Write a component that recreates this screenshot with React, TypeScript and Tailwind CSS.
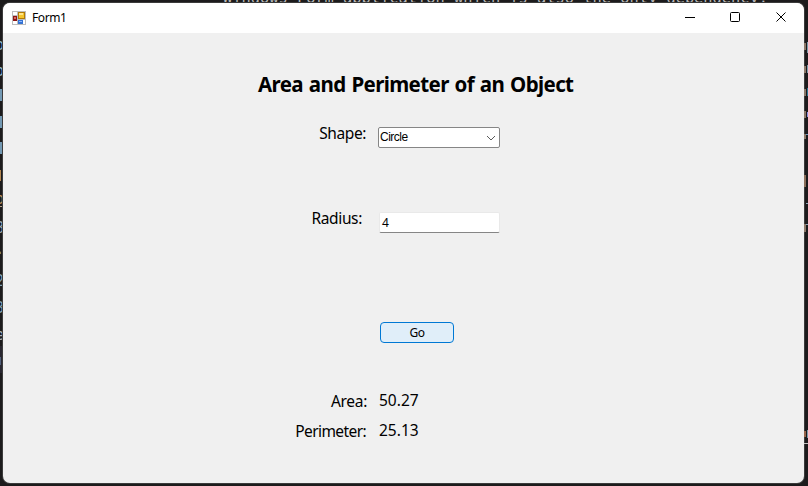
import React from "react";

const leftGlyphs = [
  { top: 36, char: "o", color: "#8fb4c9" },
  { top: 62, char: "o", color: "#8fb4c9" },
  { top: 190, char: "o", color: "#b98f5c" },
  { top: 219, char: "8", color: "#9aa9b5" },
  { top: 240, char: ".", color: "#9ab8c9" },
  { top: 272, char: "2", color: "#7f9fb0" },
  { top: 299, char: "3", color: "#7f9fb0" },
  { top: 326, char: "e", color: "#a9b0b5" },
];

const leftBars = [
  { top: 89, height: 12, width: 2, color: "#7399b3" },
  { top: 116, height: 12, width: 2, color: "#7399b3" },
  { top: 142, height: 12, width: 2, color: "#7399b3" },
  { top: 170, height: 11, width: 1, color: "#b28650" },
  { top: 206, height: 1, width: 3, color: "#b9a58c" },
  { top: 346, height: 27, width: 3, color: "#292730" },
  { top: 357, height: 8, width: 1, color: "#51607a" },
];

const rightMarks = [
  { left: 804, top: 43, height: 7, width: 2, color: "#8a7768" },
  { left: 807, top: 42, height: 11, width: 1, color: "#7e9aaa" },
  { left: 804, top: 66, height: 7, width: 2, color: "#8a7768" },
  { left: 807, top: 65, height: 8, width: 1, color: "#7e9aaa" },
  { left: 804, top: 89, height: 7, width: 2, color: "#8a7768" },
  { left: 807, top: 88, height: 8, width: 1, color: "#2c7591" },
  { left: 804, top: 111, height: 7, width: 2, color: "#8a7768" },
  { left: 807, top: 112, height: 5, width: 1, color: "#8d8fe0" },
  { left: 804, top: 134, height: 5, width: 2, color: "#8a7768" },
  { left: 806, top: 134, height: 1, width: 2, color: "#6c9bc0" },
  { left: 804, top: 175, height: 12, width: 2, color: "#8a6e5a" },
  { left: 806, top: 203, height: 1, width: 2, color: "#8ba5b8" },
  { left: 804, top: 224, height: 8, width: 2, color: "#8a7768" },
  { left: 806, top: 224, height: 1, width: 2, color: "#8ba5b8" },
  { left: 804, top: 431, height: 6, width: 2, color: "#96644a" },
  { left: 807, top: 430, height: 8, width: 1, color: "#7e9aaa" },
  { left: 804, top: 443, height: 1, width: 4, color: "#c2c2c2" },
];

function EditorBackdrop() {
  return (
    <div className="absolute inset-0 overflow-hidden font-['DejaVu_Sans_Mono',monospace] text-[15.35px] leading-[18px] whitespace-pre text-[#b6b6b6]">
      <div className="absolute top-[-11px] left-[223px]">
        Windows Form application which is also the only dependency.
      </div>
      <div className="absolute top-[467px] left-[223px]">
        {" [                "}
        <span className="text-[#b0705a]">g      ]</span>
        {"  (,    g  ,      g    p g)"}
      </div>
      {leftGlyphs.map((g) => (
        <div key={g.top} className="absolute left-[-5px]" style={{ top: g.top, color: g.color }}>
          {g.char}
        </div>
      ))}
      {leftBars.map((b) => (
        <div
          key={b.top}
          className="absolute left-0"
          style={{ top: b.top, height: b.height, width: b.width, background: b.color }}
        />
      ))}
    </div>
  );
}

function FormIcon() {
  return (
    <svg width="14" height="14" viewBox="0 0 14 14" shapeRendering="crispEdges">
      <rect width="14" height="14" fill="#bdbdbd" />
      <rect x="1" y="1" width="4" height="3" fill="#fff" />
      <rect x="1" y="10" width="4" height="3" fill="#fff" />
      <rect x="11" y="9" width="2" height="4" fill="#fff" />
      <rect x="1" y="5" width="4" height="5" fill="#8e1515" />
      <rect x="2" y="6" width="2" height="2" fill="#d86b5f" />
      <rect x="6" y="1" width="7" height="7" fill="#b27a08" />
      <rect x="7" y="2" width="5" height="5" fill="#f5c52d" />
      <rect x="7" y="2" width="4" height="2" fill="#ffe58a" />
      <rect x="6" y="9" width="5" height="4" fill="#3572d3" />
      <rect x="7" y="10" width="3" height="1" fill="#8bb7fa" />
    </svg>
  );
}

function TitleBar() {
  return (
    <header className="flex h-[30px] shrink-0 items-center bg-white pl-[9px]">
      <FormIcon />
      <span className="ml-[6px] text-[12px] leading-4 tracking-[-0.4px]">Form1</span>
      <div className="ml-auto flex h-full items-center">
        <svg width="138" height="30" viewBox="0 0 138 30" fill="none" stroke="#000">
          <path d="M19 14.5h10" />
          <rect x="64.5" y="9.5" width="9" height="9" rx="1" />
          <path d="M110.5 9.5l9 9M119.5 9.5l-9 9" />
        </svg>
      </div>
    </header>
  );
}

export default function App() {
  return (
    <div className="relative h-[486px] w-[808px] overflow-hidden bg-[#1c1b1c] font-['Noto_Sans','Segoe_UI',sans-serif] text-black">
      <EditorBackdrop />
      <div className="absolute top-[3px] left-[3px] flex h-[480px] w-[801px] flex-col overflow-hidden rounded-[7px] bg-[#f0f0f0] shadow-[0_0_0_1px_#3b3b3b]">
        <TitleBar />
        <main className="flex flex-col">
          <h1 className="mt-[36px] ml-[255px] text-[20.5px] leading-[30px] font-bold tracking-[-0.61px] [word-spacing:1.1px] whitespace-nowrap">
            Area and Perimeter of an Object
          </h1>
          <div className="mt-[27px] flex h-[22px]">
            <label className="w-[363px] text-right text-[15.5px] leading-[15px] tracking-[-0.4px]">Shape:</label>
            <div className="mt-[1px] ml-[12px] flex h-[21px] w-[122px] items-center justify-between rounded-[2px] border border-[#868686] bg-white pr-[3px] pl-[1px]">
              <span className="mt-[-2px] font-['Liberation_Sans',Arial,sans-serif] text-[12px] leading-[18px] tracking-[-0.5px]">Circle</span>
              <svg width="10" height="6" viewBox="0 0 10 6" fill="none" stroke="#5c5c5c">
                <path d="M1 1l4 4 4-4" />
              </svg>
            </div>
          </div>
          <div className="mt-[63px] flex h-[22px]">
            <label className="w-[359px] text-right text-[15.5px] leading-[15px] tracking-[-0.35px]">Radius:</label>
            <div className="mt-[1px] ml-[17px] h-[21px] w-[121px] rounded-[2px] border border-[#e9e9e9] border-b-[#868686] bg-white pl-[2px] text-[12px] leading-[19px] tracking-[-0.3px]">
              4
            </div>
          </div>
          <button className="mt-[89px] ml-[377px] h-[21px] w-[74px] rounded-[4px] border border-[#0078d4] bg-[#e0eef9] text-[12px] leading-[19px] tracking-[-0.5px]">
            Go
          </button>
          <div className="mt-[48px] flex h-[30px] text-[15.5px] leading-[20px]">
            <span className="w-[364px] text-right tracking-[-0.3px]">Area:</span>
            <span className="mt-[-1px] ml-[12px]">50.27</span>
          </div>
          <div className="flex h-[30px] text-[15.5px] leading-[20px]">
            <span className="w-[363px] text-right tracking-[-0.6px]">Perimeter:</span>
            <span className="mt-[-1px] ml-[13px]">25.13</span>
          </div>
        </main>
      </div>
      {rightMarks.map((m, i) => (
        <div
          key={i}
          className="absolute"
          style={{ left: m.left, top: m.top, height: m.height, width: m.width, background: m.color }}
        />
      ))}
    </div>
  );
}
